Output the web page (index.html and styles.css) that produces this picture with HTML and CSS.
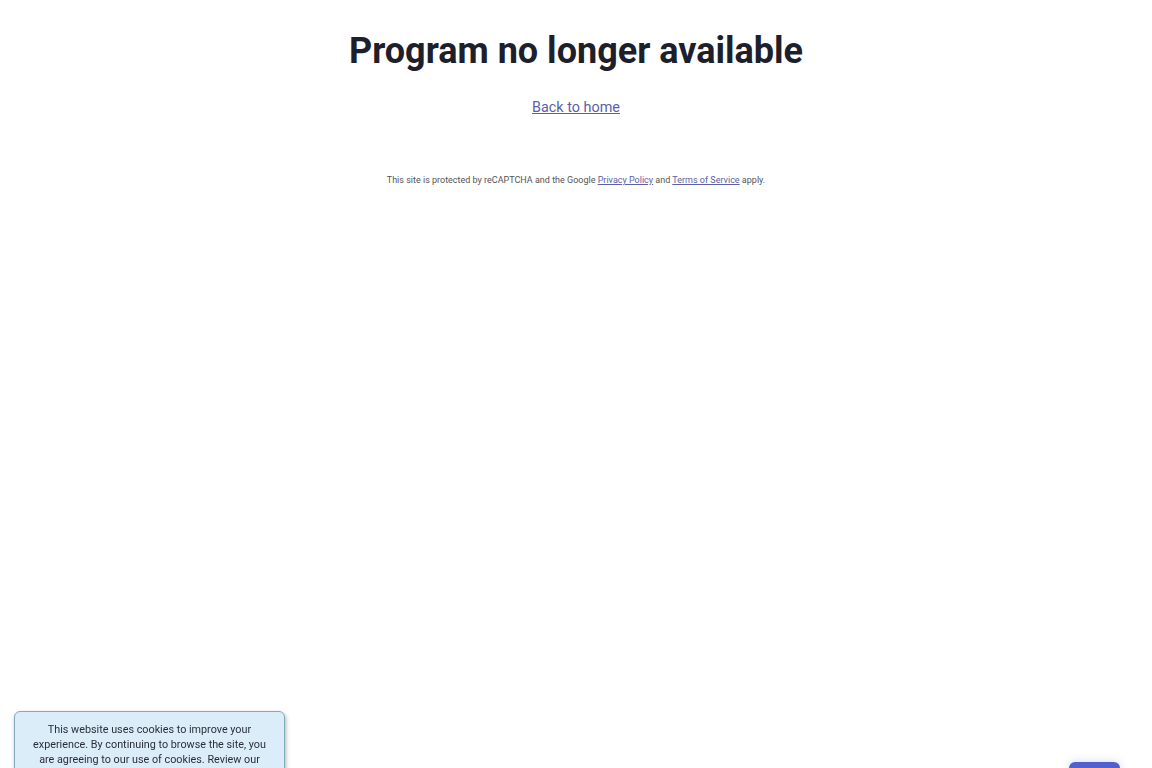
FILE: index.html
```html
<!DOCTYPE html>
<html lang="en">
<head>
    <meta charset="UTF-8">
    <meta name="viewport" content="width=device-width, initial-scale=1.0">
    <title>Program no longer available</title>
    <link rel="stylesheet" href="styles.css">
</head>
<body>
    <main class="content">
        <h1 class="title">Program no longer available</h1>
        <p class="back"><a href="#">Back to home</a></p>
        <p class="recaptcha">This site is protected by reCAPTCHA and the Google <a href="#">Privacy Policy</a> and <a href="#">Terms of Service</a> apply.</p>
    </main>

    <!-- Bandeau cookies, coupe par le bas de la fenetre -->
    <div class="cookies">
        This website uses cookies to improve your experience. By continuing to browse the site, you are agreeing to our use of cookies. Review our
    </div>

    <button class="help" type="button" aria-label="Help"></button>
</body>
</html>
```

FILE: styles.css
```css
html, body {
    height: 100%;
}
body {
    margin: 0;
    overflow: hidden;
    background-color: #fff;
    color: #1d202b;
    font-family: Roboto, "Liberation Sans", sans-serif;
}
.content {
    padding-top: 27px;
    text-align: center;
}
.title {
    margin: 0;
    font-size: 36px;
    line-height: 48px;
    font-weight: 700;
}
.back {
    margin: 23px 0 0;
    font-size: 14.4px;
    line-height: 19px;
}
a {
    color: #5a5fa8;
}
.recaptcha {
    margin: 56px 0 0;
    font-size: 9px;
    line-height: 14px;
    color: #555;
}

/* Au-dessus du contenu */
.cookies {
    position: fixed;
    left: 14px;
    top: 711px;
    width: 271px;
    height: 80px;
    box-sizing: border-box;
    padding: 10px 16px;
    background-color: #dcedfa;
    border: 1px solid #82a9bc;
    border-radius: 6px;
    box-shadow: 1px 2px 4px rgba(0, 0, 0, 0.3);
    font-size: 10.8px;
    line-height: 15px;
    text-align: center;
    color: #2a2d38;
}
.help {
    position: fixed;
    left: 1069px;
    top: 762px;
    width: 51px;
    height: 30px;
    border: 0;
    border-radius: 6px;
    background-color: #5061cf;
    box-shadow: 0 0 8px rgba(80, 97, 207, 0.25);
}
```
